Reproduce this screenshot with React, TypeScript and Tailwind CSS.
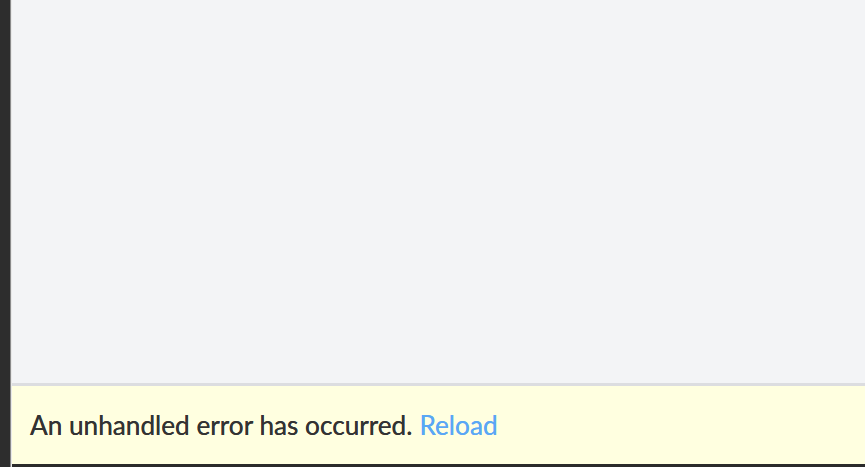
export default function App() {
  return (
    <div className="flex h-[467px] w-[865px] overflow-hidden bg-[#2b2b2b]">
      <div className="w-[10px] shrink-0 bg-[#2d2d2d]" />
      <div className="w-[1px] shrink-0 bg-[#8a8a8a]" />
      <div className="w-[1px] shrink-0 bg-[#e8e8e8]" />
      <div className="flex min-w-0 flex-1 flex-col pb-[3px]">
        <div className="flex-1 bg-[#f3f4f6]" />
        <div className="h-[3px] bg-[#dcdde0]" />
        <div className="flex h-[78px] items-center bg-[#ffffe0] pl-[18px] pt-[2px] font-['Lato',sans-serif] text-[26.2px] text-[#333333] [text-shadow:0_0_0.4px_#333333]">
          <span>An unhandled error has occurred.</span>
          <span className="ml-[7px] text-[#5aa7f5] [text-shadow:0_0_0.4px_#5aa7f5]">Reload</span>
        </div>
      </div>
    </div>
  );
}
